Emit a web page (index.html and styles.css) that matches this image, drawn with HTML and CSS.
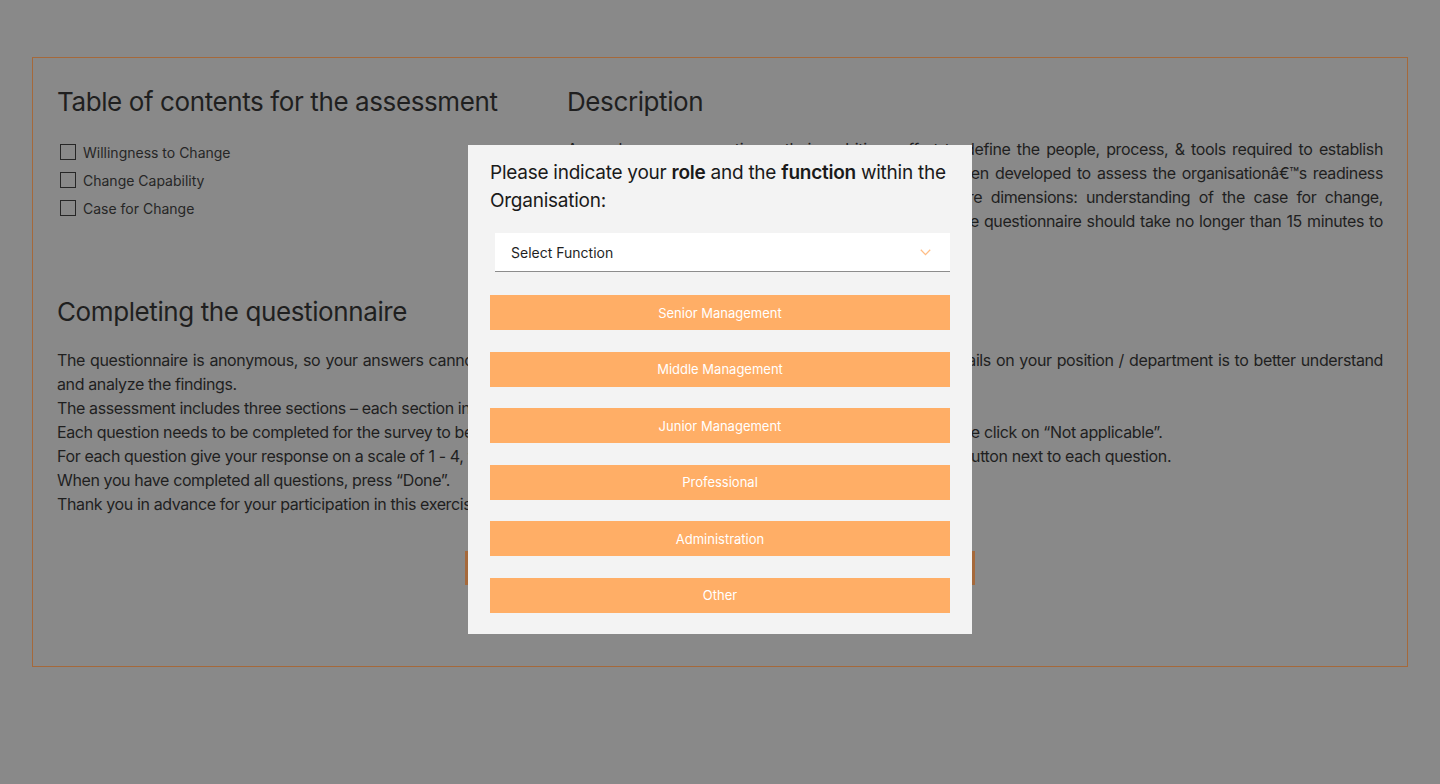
FILE: index.html
```html
<!DOCTYPE html>
<html lang="en">
<head>
<meta charset="utf-8">
<title>Assessment</title>
<link rel="stylesheet" href="styles.css">
</head>
<body>
<div class="page">
  <div class="card">
    <div class="top">
      <section class="toc">
        <h2 class="heading">Table of contents for the assessment</h2>
        <ul class="toc-list">
          <li class="toc-item"><span class="box"></span>Willingness to Change</li>
          <li class="toc-item"><span class="box"></span>Change Capability</li>
          <li class="toc-item"><span class="box"></span>Case for Change</li>
        </ul>
      </section>
      <section class="desc">
        <h2 class="heading">Description</h2>
        <p class="desc-text">As each company continues their ambitious effort to define the people, process, &amp; tools required to establish<br>a sustainable transformation, this questionnaire has been developed to assess the organisationâ€™s readiness<br>for change, measured across the following three core dimensions: understanding of the case for change,<br>willingness to change and overall change capability. The questionnaire should take no longer than 15 minutes to<br>complete.</p>
      </section>
    </div>
    <section class="completing">
      <h2 class="heading">Completing the questionnaire</h2>
      <div class="instructions">
        <p class="line">The questionnaire is anonymous, so your answers cannot be traced back to you. The only reason we ask you for further details on your position / department is to better understand and analyze the findings.</p>
        <p class="line">The assessment includes three sections – each section includes several questions.</p>
        <p class="line">Each question needs to be completed for the survey to be submitted. If a question does not apply to your current job role, please click on “Not applicable”.</p>
        <p class="line">For each question give your response on a scale of 1 - 4, where 1 is the lowest and 4 is the highest, by clicking on the relevant button next to each question.</p>
        <p class="line">When you have completed all questions, press “Done”.</p>
        <p class="line">Thank you in advance for your participation in this exercise.</p>
      </div>
      <div class="start-row"><button class="start-btn" type="button">Start the assessment</button></div>
    </section>
  </div>
</div>

<div class="overlay">
  <div class="modal">
    <p class="modal-title">Please indicate your <b>role</b> and the <b>function</b> within the Organisation:</p>
    <div class="select">
      <span class="select-label">Select Function</span>
      <svg class="chevron" width="11" height="7" viewBox="0 0 11 7"><path d="M0.8 0.8 L5.5 5.6 L10.2 0.8" fill="none" stroke="#ffbd85" stroke-width="1.3"/></svg>
    </div>
    <div class="options">
      <button class="opt" type="button">Senior Management</button>
      <button class="opt" type="button">Middle Management</button>
      <button class="opt" type="button">Junior Management</button>
      <button class="opt" type="button">Professional</button>
      <button class="opt" type="button">Administration</button>
      <button class="opt" type="button">Other</button>
    </div>
  </div>
</div>
</body>
</html>
```

FILE: styles.css
```css
* { box-sizing: border-box; }
html, body { margin: 0; padding: 0; }
body {
  background: #898989;
  font-family: Inter, "Noto Sans", sans-serif;
  color: #1f1f1f;
}
.page {
  padding: 57px 32px 0 32px;
}
.card {
  border: 1px solid #a5693b;
  padding: 0 24px;
  height: 610px;
}
.top {
  display: grid;
  grid-template-columns: 510px 1fr;
}
.heading {
  margin: 28px 0 0 0;
  font-size: 26px;
  font-weight: 400;
  line-height: 32px;
  letter-spacing: -0.4px;
  color: #1f1f1f;
}
.toc-list {
  list-style: none;
  margin: 20px 0 0 0;
  padding: 0;
}
.toc-item {
  display: flex;
  align-items: center;
  height: 28px;
  font-size: 14px;
  color: #262626;
}
.box {
  width: 16px;
  height: 16px;
  border: 1px solid #262626;
  margin: 0 7px 0 3px;
  flex: none;
}
.desc-text {
  margin: 19px 0 0 0;
  font-size: 16px;
  line-height: 24px;
  letter-spacing: -0.38px;
  text-align: justify;
  text-align-last: justify;
}
.completing .heading {
  margin-top: 39px;
}
.instructions {
  margin-top: 20px;
}
.line {
  margin: 0;
  font-size: 16px;
  line-height: 24px;
  letter-spacing: -0.38px;
  text-align: justify;
}
.start-row {
  display: flex;
  justify-content: center;
  margin-top: 35px;
}
.start-btn {
  width: 510px;
  height: 34px;
  border: none;
  background: #a5693b;
  color: #a5693b;
  font-family: inherit;
}
.overlay {
  position: fixed;
  inset: 0;
  display: flex;
  align-items: center;
  justify-content: center;
}
.modal {
  width: 504px;
  background: #f3f3f3;
  padding: 14px 22px 21px 22px;
  margin-top: -5px;
}
.modal-title {
  margin: 0;
  font-size: 19px;
  line-height: 28px;
  letter-spacing: -0.25px;
  color: #1a1a1a;
}
.modal-title b { font-weight: 600; }
.select {
  margin: 18px 0 0 5px;
  height: 39px;
  background: #fff;
  border-bottom: 1px solid #8c8c8c;
  display: flex;
  align-items: center;
  justify-content: space-between;
  padding: 0 19px 0 16px;
}
.select-label {
  font-size: 14px;
  color: #1f1f1f;
}
.options {
  margin-top: 23px;
  display: flex;
  flex-direction: column;
  gap: 21.6px;
}
.opt {
  height: 35px;
  border: none;
  background: #ffae66;
  color: #fff;
  font-family: inherit;
  font-size: 13px;
  padding: 0;
}
```
